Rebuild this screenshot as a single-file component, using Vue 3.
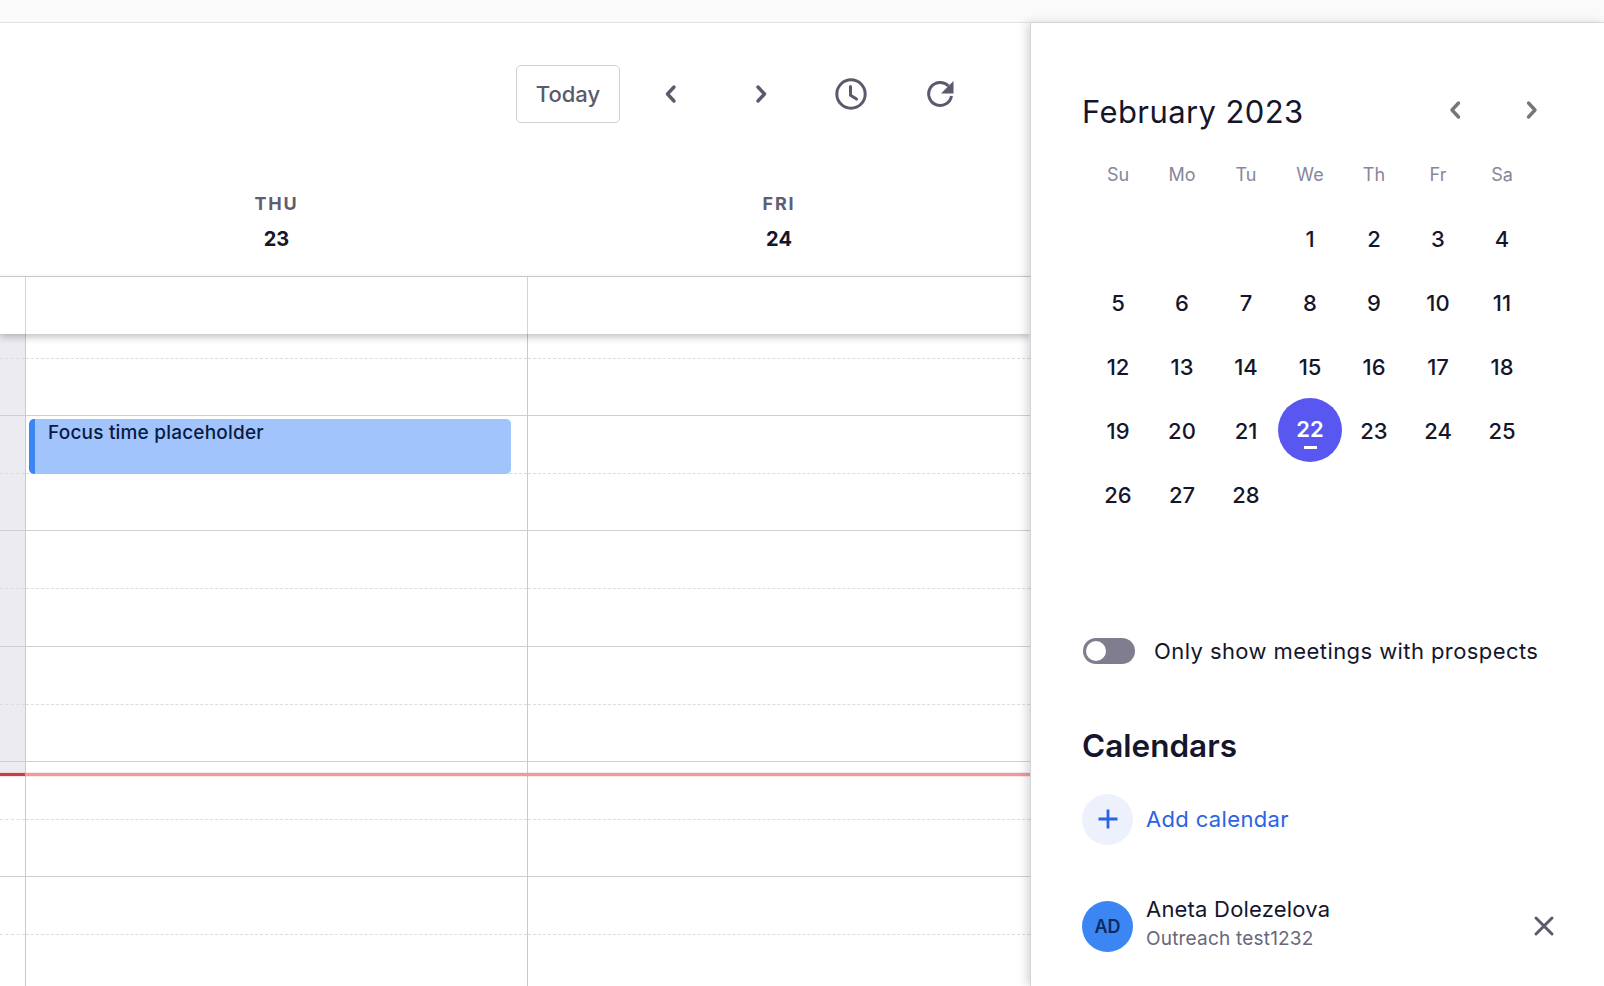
<script setup>
const weekdays = ['Su', 'Mo', 'Tu', 'We', 'Th', 'Fr', 'Sa']
const today = 22
const monthCells = [null, null, null, ...Array.from({ length: 28 }, (_, i) => i + 1)]
const hourRows = 6
const columns = [{ name: 'THU', date: 23 }, { name: 'FRI', date: 24 }]
</script>

<template>
  <div class="page">
    <div class="topbar"></div>
    <div class="main">
      <section class="calendar">
        <div class="toolbar">
          <button class="today-btn">Today</button>
          <button class="icon-btn">
            <svg width="24" height="24" viewBox="0 0 24 24"><path d="M15 5l-6.500 7 6.500 7" class="stroke" /></svg>
          </button>
          <button class="icon-btn">
            <svg width="24" height="24" viewBox="0 0 24 24"><path d="M9 5l6.500 7-6.500 7" class="stroke" /></svg>
          </button>
          <button class="icon-btn">
            <svg width="34" height="34" viewBox="0 0 34 34"><circle cx="17" cy="17" r="14.200" class="stroke thin" /><path d="M16.500 9.500v8.800l6 3.800" class="stroke thin" /></svg>
          </button>
          <button class="icon-btn">
            <svg width="32" height="32" viewBox="0 0 32 32">
              <path d="M23.500 8A11.500 11.500 0 1 0 26.500 18" class="arc" />
              <path d="M28.500 3v12.500h-12.500z" class="fill" />
            </svg>
          </button>
        </div>

        <div class="day-head">
          <div class="gutter-cell"></div>
          <div v-for="c in columns" :key="c.name" class="day-title">
            <span class="day-name">{{ c.name }}</span>
            <span class="day-date">{{ c.date }}</span>
          </div>
        </div>

        <div class="all-day">
          <div class="gutter-cell"></div>
          <div v-for="c in columns" :key="c.name" class="all-day-cell"></div>
        </div>

        <div class="scroller">
          <div class="grid">
            <div class="gutter">
              <div v-for="n in hourRows" :key="n" class="hour"><div class="half"></div></div>
            </div>
            <div v-for="(c, i) in columns" :key="c.name" class="day-col">
              <div v-for="n in hourRows" :key="n" class="hour"><div class="half"></div></div>
              <div v-if="i === 0" class="event">Focus time placeholder</div>
            </div>
            <div class="now-line"><span class="now-stub"></span></div>
          </div>
        </div>
      </section>

      <aside class="side">
        <div class="month-head">
          <h2 class="month-title">February 2023</h2>
          <div class="month-nav">
            <svg width="22" height="24" viewBox="0 0 22 24"><path d="M14.500 5l-6.500 7 6.500 7" class="stroke gray" /></svg>
            <svg width="22" height="24" viewBox="0 0 22 24"><path d="M7.500 5l6.500 7-6.500 7" class="stroke gray" /></svg>
          </div>
        </div>

        <div class="month-grid">
          <div v-for="w in weekdays" :key="w" class="weekday">{{ w }}</div>
          <div v-for="(d, i) in monthCells" :key="i" class="cell">
            <span v-if="d" class="date" :class="{ current: d === today }">{{ d }}</span>
          </div>
        </div>

        <label class="prospects">
          <span class="switch"><span class="knob"></span></span>
          <span>Only show meetings with prospects</span>
        </label>

        <h3 class="cal-heading">Calendars</h3>

        <div class="add-row">
          <span class="add-circle">
            <svg width="24" height="24" viewBox="0 0 24 24"><path d="M12 2.500v19M2.500 12h19" class="plus" /></svg>
          </span>
          <span class="add-text">Add calendar</span>
        </div>

        <div class="cal-row">
          <span class="avatar">AD</span>
          <div class="cal-info">
            <div class="cal-name">Aneta Dolezelova</div>
            <div class="cal-sub">Outreach test1232</div>
          </div>
          <svg class="close" width="24" height="24" viewBox="0 0 24 24"><path d="M4 4l16 16M20 4L4 20" class="stroke thin" /></svg>
        </div>
      </aside>
    </div>
  </div>
</template>

<style scoped>
.page {
  height: 986px;
  display: flex;
  flex-direction: column;
  overflow: hidden;
  background: #fff;
  color: #15152b;
  font-family: Inter, "Liberation Sans", sans-serif;
}

.topbar {
  height: 22px;
  flex: none;
  background: #fafafa;
  border-bottom: 1px solid #e3e3e5;
}

.main {
  flex: 1;
  min-height: 0;
  display: flex;
}

.calendar {
  width: 1030px;
  flex: none;
  display: flex;
  flex-direction: column;
  min-height: 0;
}

.toolbar {
  height: 147px;
  flex: none;
  box-sizing: border-box;
  padding: 42px 61px 0 0;
  display: flex;
  justify-content: flex-end;
  align-items: flex-start;
  gap: 34px;
}

button {
  font-family: inherit;
  background: none;
  border: none;
  padding: 0;
}

.today-btn {
  width: 104px;
  height: 58px;
  margin-right: -11px;
  border: 1px solid #cfcfd5;
  border-radius: 5px;
  font-size: 22px;
  font-weight: 500;
  color: #5b5a6c;
}

.icon-btn {
  width: 56px;
  height: 58px;
  display: flex;
  align-items: center;
  justify-content: center;
}

.stroke {
  fill: none;
  stroke: #5b5a6c;
  stroke-width: 3.4;
  stroke-linecap: round;
  stroke-linejoin: round;
}

.stroke.thin {
  stroke-width: 3;
}

.stroke.gray {
  stroke: #75757a;
}

.arc {
  fill: none;
  stroke: #5b5a6c;
  stroke-width: 3;
}

.fill {
  fill: #5b5a6c;
}

.day-head,
.all-day,
.grid {
  display: grid;
  grid-template-columns: 25px 502px 503px;
}

.day-head {
  height: 106px;
  flex: none;
  border-bottom: 1px solid #cfcfd3;
}

.day-title {
  display: flex;
  flex-direction: column;
  align-items: center;
  padding: 22px 0 0 1px;
}

.day-name {
  font-size: 18px;
  line-height: 24px;
  font-weight: 700;
  letter-spacing: 1.800px;
  color: #5f5e70;
}

.day-date {
  margin-top: 11px;
  font-size: 20px;
  line-height: 24px;
  font-weight: 700;
  color: #15152b;
}

.all-day {
  height: 57px;
  flex: none;
  position: relative;
  z-index: 2;
  background: #fff;
  box-shadow: 0 3px 7px rgba(30, 30, 50, 0.28);
}

.all-day-cell {
  border-left: 1px solid #d4d4d8;
}

.scroller {
  flex: 1;
  min-height: 0;
  overflow: hidden;
}

.grid {
  position: relative;
  margin-top: -33px;
}

.gutter {
  background: linear-gradient(#ecebf0 473px, #fff 473px);
}

.day-col {
  position: relative;
  border-left: 1px solid #c9c9ce;
}

.hour {
  height: 115.2px;
  box-sizing: border-box;
  border-bottom: 1px solid #cfcfd3;
  padding-top: 57px;
}

.half {
  border-top: 1px dashed #dcdce0;
}

.event {
  position: absolute;
  top: 117.500px;
  left: 3px;
  width: 482px;
  height: 55.500px;
  box-sizing: border-box;
  padding: 2.500px 0 0 13px;
  border-left: 6px solid #3c86f4;
  border-radius: 5px;
  background: #a0c4fb;
  color: #0b1a45;
  font-size: 19px;
  line-height: 24px;
  font-weight: 500;
  letter-spacing: 0.2px;
}

.now-line {
  position: absolute;
  top: 472px;
  left: 0;
  right: 0;
  height: 3px;
  background: #ec9a9e;
  box-shadow: 0 0 0 1px rgba(236, 154, 158, 0.25);
}

.now-stub {
  display: block;
  width: 25px;
  height: 3px;
  background: #d23a3f;
}

.side {
  flex: 1;
  position: relative;
  z-index: 3;
  box-sizing: border-box;
  padding: 63px 36px 0 51px;
  background: #fff;
  border-left: 1px solid #d4d4d8;
  box-shadow: -3px 0 9px rgba(30, 30, 50, 0.18);
}

.month-head {
  display: flex;
  justify-content: space-between;
  align-items: center;
  height: 50px;
}

.month-title {
  margin: 0;
  font-size: 31px;
  font-weight: 400;
  letter-spacing: 0.4px;
  color: #15152b;
}

.month-nav {
  display: flex;
  gap: 55px;
  margin-right: 25px;
  margin-top: -3px;
}

.month-grid {
  display: grid;
  grid-template-columns: repeat(7, 64px);
  grid-auto-rows: 64px;
  margin: 6.500px 0 0 4px;
}

.weekday {
  display: flex;
  align-items: center;
  justify-content: center;
  font-size: 18px;
  color: #87869a;
}

.cell {
  display: flex;
  align-items: center;
  justify-content: center;
  font-size: 22px;
  font-weight: 500;
}

.date {
  width: 64px;
  height: 64px;
  border-radius: 50%;
  display: flex;
  align-items: center;
  justify-content: center;
  position: relative;
}

.date.current {
  box-sizing: border-box;
  padding-bottom: 3px;
  margin-top: -1px;
  background: #5858f0;
  color: #fff;
  font-weight: 600;
}

.date.current::after {
  content: "";
  position: absolute;
  left: 26px;
  bottom: 13px;
  width: 13px;
  height: 3px;
  background: #fff;
}

.prospects {
  display: flex;
  align-items: center;
  gap: 19px;
  margin: 111.500px 0 0 1px;
  font-size: 22px;
  letter-spacing: 0.42px;
  color: #15152b;
}

.switch {
  width: 52px;
  height: 26px;
  border-radius: 13px;
  background: #7f7d8e;
  position: relative;
  flex: none;
}

.knob {
  position: absolute;
  top: 3px;
  left: 3px;
  width: 20px;
  height: 20px;
  border-radius: 50%;
  background: #fff;
}

.cal-heading {
  margin: 61.500px 0 0;
  font-size: 31.500px;
  line-height: 40px;
  font-weight: 600;
  color: #15152b;
}

.add-row {
  display: flex;
  align-items: center;
  gap: 13px;
  margin-top: 28px;
}

.add-circle {
  width: 51px;
  height: 51px;
  border-radius: 50%;
  background: #edf1fb;
  display: flex;
  align-items: center;
  justify-content: center;
}

.plus {
  fill: none;
  stroke: #2b63e3;
  stroke-width: 2.8;
}

.add-text {
  font-size: 22px;
  letter-spacing: 0.35px;
  color: #2b63e3;
}

.cal-row {
  display: flex;
  align-items: center;
  gap: 13px;
  margin-top: 56px;
}

.avatar {
  width: 51px;
  height: 51px;
  border-radius: 50%;
  background: #3c86f4;
  display: flex;
  align-items: center;
  justify-content: center;
  flex: none;
  font-size: 18px;
  font-weight: 600;
  color: #0f2a63;
}

.cal-info {
  flex: 1;
  margin-top: -6px;
}

.cal-name {
  font-size: 22px;
  line-height: 28px;
  letter-spacing: 0.2px;
  margin-bottom: 4px;
}

.cal-sub {
  font-size: 19px;
  line-height: 24px;
  letter-spacing: 0.2px;
  color: #68677a;
}

.close {
  margin-right: 12px;
}
</style>
